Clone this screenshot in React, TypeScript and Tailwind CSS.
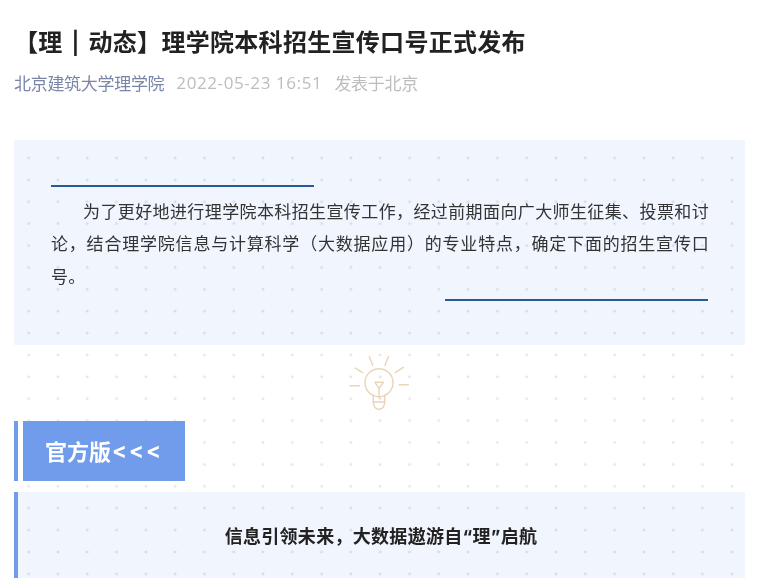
const cjk = "font-['Noto_Sans_CJK_SC','Noto_Sans',sans-serif]"

// --- Sub-component: light bulb divider ---
function BulbIcon() {
    return (
        <svg width="60" height="56" viewBox="0 0 60 56" fill="none" stroke="#e8d5b7" strokeWidth="1.4" strokeLinecap="round" strokeLinejoin="round">
            <circle cx="30" cy="27.7" r="14" />
            <path d="M24.3 40 V47 H35.700 V40" />
            <path d="M24.300 47 Q24.500 53.500 30 54.500 Q35.500 53.500 35.700 47" />
            <path d="M26 27.300 H34.300 L30 33.300 Z" />
            <path d="M30 33.300 V43" />
            <path d="M6 13 L13.700 17.700" />
            <path d="M1 30.700 H10.300" />
            <path d="M20.300 1.700 L23.700 10.300" />
            <path d="M39.300 1.700 L36 10.300" />
            <path d="M54.300 12.300 L46.300 17.700" />
            <path d="M50.300 29.700 H59.300" />
        </svg>
    )
}

export default function App() {
    return (
        <div className={`${cjk} w-[758px] h-[588px] overflow-hidden bg-white px-[14px]`}>
            <h1 className="pt-[23px] h-[70px] text-[24px] leading-[36px] tracking-[0.3px] font-bold text-[#222222] whitespace-nowrap">
                【理<span className="font-['Inter',sans-serif] font-semibold text-[22px] px-[3px]"> | </span>动态】理学院本科招生宣传口号正式发布
            </h1>
            <div className="flex h-[70px] items-start text-[17px] leading-[26px] whitespace-nowrap text-[#bdbdbd] -tracking-[0.3px]">
                <span className="text-[#7a86a8] mr-[12px]">北京建筑大学理学院</span>
                <span className="mr-[12px] font-['Open_Sans',sans-serif] tracking-[0.6px]">2022-05-23 16:51</span>
                <span>发表于北京</span>
            </div>

            {/* dotted sheet that runs behind all the panels */}
            <div className="w-[731px] h-[448px] bg-[radial-gradient(circle,#e6e6e6_1px,transparent_1.8px)] bg-[length:29.3px_21.9px] bg-[position:0px_7px]">
                <section className="h-[205px] bg-[#f0f5fe] mix-blend-multiply px-[37px] pt-[45px]">
                    <div className="w-[263px] h-[1.5px] bg-[#2a5a94]" />
                    <p className="mt-[8px] w-[658px] text-[17px] leading-[32.5px] tracking-[0.3px] text-[#333333] text-justify indent-[32px]">
                        为了更好地进行理学院本科招生宣传工作，经过前期面向广大师生征集、投票和讨论，结合理学院信息与计算科学（大数据应用）的专业特点，确定下面的招生宣传口号。
                    </p>
                    <div className="ml-[394px] mt-[7px] w-[263px] h-[1.5px] bg-[#2a5a94]" />
                </section>

                <div className="flex justify-center h-[76px] pt-[10px] pr-[1px]">
                    <BulbIcon />
                </div>

                <div className="flex h-[60px] gap-[5px]">
                    <div className="w-[4px] bg-[#719cec]" />
                    <div className="w-[162px] bg-[#719cec] text-white font-bold flex items-center pl-[22px] pb-[1px] text-[22px] whitespace-nowrap">
                        官方版<span className="ml-[1px] tracking-[2px] font-['Inter',sans-serif]">&lt;&lt;&lt;</span>
                    </div>
                </div>

                <section className="mt-[11px] h-[86px] border-l-[4px] border-[#719cec] bg-[#f0f5fe] mix-blend-multiply flex items-center justify-center pt-[3px]">
                    <p className="font-['Inter','Noto_Sans_CJK_SC',sans-serif] text-[18px] tracking-[0.3px] font-bold text-[#222222] pr-[1px] whitespace-nowrap">
                        信息引领未来，大数据遨游自“理”启航
                    </p>
                </section>
            </div>
        </div>
    )
}
